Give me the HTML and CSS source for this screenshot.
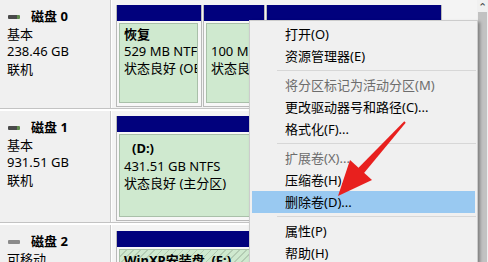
FILE: index.html
```html
<!DOCTYPE html>
<html lang="zh-CN">
<head>
  <meta charset="UTF-8">
  <title>磁盘管理</title>
  <link rel="stylesheet" href="styles.css">
</head>
<body>
  <div class="screen">
    <div class="volumes">
      <!-- 磁盘 0 -->
      <div class="disk disk0">
        <div class="disk-label">
          <div class="disk-name"><span class="disk-icon"></span>磁盘 0</div>
          <div>基本</div>
          <div>238.46 GB</div>
          <div>联机</div>
        </div>
        <div class="disk-parts">
          <div class="part w1">
            <div class="part-bar"></div>
            <div class="part-body">
              <div class="part-fill">
                <div class="bold">恢复</div>
                <div>529 MB NTFS</div>
                <div>状态良好 (OEM 分区)</div>
              </div>
            </div>
          </div>
          <div class="part w2">
            <div class="part-bar"></div>
            <div class="part-body">
              <div class="part-fill">
                <div>&nbsp;</div>
                <div>100 MB</div>
                <div>状态良好</div>
              </div>
            </div>
          </div>
          <div class="part w3">
            <div class="part-bar"></div>
            <div class="part-body">
              <div class="part-fill"></div>
            </div>
          </div>
        </div>
      </div>

      <!-- 磁盘 1 -->
      <div class="disk disk1">
        <div class="disk-label">
          <div class="disk-name"><span class="disk-icon"></span>磁盘 1</div>
          <div>基本</div>
          <div>931.51 GB</div>
          <div>联机</div>
        </div>
        <div class="disk-parts">
          <div class="part w-full">
            <div class="part-bar"></div>
            <div class="part-body">
              <div class="part-fill">
                <div class="bold indent">(D:)</div>
                <div>431.51 GB NTFS</div>
                <div>状态良好 (主分区)</div>
              </div>
            </div>
          </div>
        </div>
      </div>

      <!-- 磁盘 2 -->
      <div class="disk disk2">
        <div class="disk-label">
          <div class="disk-name"><span class="disk-icon removable"></span>磁盘 2</div>
          <div>可移动</div>
        </div>
        <div class="disk-parts">
          <div class="part w-full">
            <div class="part-bar"></div>
            <div class="part-body">
              <div class="part-fill hatched">
                <div class="bold">WinXP安装盘&nbsp;&nbsp;(F:)</div>
              </div>
            </div>
          </div>
        </div>
      </div>
    </div>
    <div class="scrollbar">
      <div class="scroll-up">&#8963;</div>
      <div class="scroll-thumb"></div>
    </div>
  </div>

  <!-- 右键菜单 -->
  <ul class="menu">
    <li>打开(O)</li>
    <li>资源管理器(E)</li>
    <li class="sep"></li>
    <li class="disabled">将分区标记为活动分区(M)</li>
    <li>更改驱动器号和路径(C)...</li>
    <li>格式化(F)...</li>
    <li class="sep"></li>
    <li class="disabled">扩展卷(X)...</li>
    <li>压缩卷(H)...</li>
    <li class="active">删除卷(D)...</li>
    <li class="sep"></li>
    <li>属性(P)</li>
    <li>帮助(H)</li>
  </ul>

  <!-- 红色箭头标注 -->
  <svg class="arrow" width="90" height="85" viewBox="0 0 90 85">
    <polygon points="33.2,56 27.8,50.6 74.3,3.3 75.7,4.7" fill="#e8201e"/>
    <polygon points="8,78 42,62 20,42" fill="#e8201e"/>
  </svg>
</body>
</html>
```

FILE: styles.css
```css
body {
  margin: 0;
  background: #f0f0f0;
  font-family: "Noto Sans", "Noto Sans CJK SC", sans-serif;
  font-size: 13px;
  color: #000;
  overflow: hidden;
}
.screen {
  display: flex;
  width: 488px;
  height: 262px;
  overflow: hidden;
}
.volumes {
  flex: 1;
  background: #fff;
}
.disk {
  display: flex;
  border-bottom: 1px solid #c3c3c3;
  margin-bottom: 2px;
  background: #f0f0f0;
}
.disk0 { height: 108px; }
.disk1 { height: 111px; }
.disk2 { height: 70px; }

.disk-label {
  width: 103px;
  padding: 8px 0 0 7px;
  border-right: 1px solid #c8c8c8;
  line-height: 17.5px;
  white-space: nowrap;
}
.disk-name {
  font-weight: bold;
  display: flex;
  align-items: center;
}
.disk-icon {
  display: inline-block;
  width: 12px;
  height: 4px;
  background: linear-gradient(to right, #4a4a4a 75%, #5f8a4f 75%);
  margin: 0 11px 0 1px;
  border-radius: 1px;
}
.disk-icon.removable {
  background: #8a8a8a;
}

.disk-parts {
  flex: 1;
  display: flex;
  padding: 5px 0 1px 4px;
  background: #f4f4f4;
  border-left: 1px solid #fff;
}
.disk2 .disk-parts { padding-top: 6px; }
.part {
  display: flex;
  flex-direction: column;
  margin-right: 1px;
  border: 1px solid #b9b9b9;
  border-top: none;
  background: #f7f7f7;
}
.w1 { width: 84px; }
.w2 { width: 60px; }
.w3 { width: 174px; }
.w-full { width: 321px; }

.part-bar {
  height: 16px;
  background: #01017d;
}
.part-body {
  flex: 1;
  padding: 2px 3px 3px 2px;
  display: flex;
  min-height: 0;
}
.part-fill {
  flex: 1;
  background: #cfe9cf;
  border: 1px solid #a9c0a9;
  padding: 2px 0 0 4px;
  line-height: 17px;
  white-space: nowrap;
  overflow: hidden;
}
.disk1 .part-fill { padding-top: 5px; line-height: 17.5px; }
.part-fill.hatched {
  background: repeating-linear-gradient(135deg, #cfe9cf 0 4px, #b4ccb4 4px 5px);
}
.bold { font-weight: bold; }
.indent { padding-left: 8px; }

.scrollbar {
  width: 11px;
  background: #f0f0f0;
  display: flex;
  flex-direction: column;
}
.scroll-up {
  height: 11px;
  font-size: 11px;
  line-height: 14px;
  text-align: center;
  color: #444;
}
.scroll-thumb {
  flex: 1;
  margin: 1px 1px 0 1px;
  background: #c2c2c2;
}

/* kontextove menu */
.menu {
  position: absolute;
  left: 249px;
  top: 20px;
  width: 227px;
  height: 239px;
  overflow: hidden;
  margin: 0;
  padding: 2px 0 0 0;
  list-style: none;
  background: #f0f0f0;
  border: 1px solid #cccccc;
  border-bottom: none;
  box-shadow: 2px 2px 3px rgba(0, 0, 0, 0.35);
  font-family: "Noto Sans", "Noto Sans CJK SC", sans-serif;
  font-size: 13px;
}
.menu li {
  height: 22px;
  line-height: 22px;
  padding-left: 33px;
  margin: 0 2px;
  white-space: nowrap;
}
.menu li.sep {
  height: 1px;
  margin: 3px 1px 3px 27px;
  padding: 0;
  background: #d7d7d7;
}
.menu li.disabled {
  color: #6d6d6d;
}
.menu li.active {
  background: #99c9f1;
}

.arrow {
  position: absolute;
  left: 330px;
  top: 118px;
}
```
